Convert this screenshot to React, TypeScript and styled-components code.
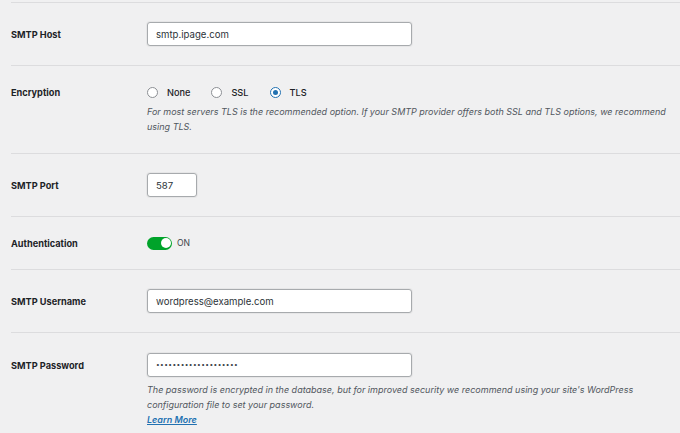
import * as React from "react";
import styled, { createGlobalStyle } from "styled-components";

const GlobalStyle = createGlobalStyle`
  html, body {
    margin: 0;
    padding: 0;
    background: #f0f0f1;
  }
  body {
    font-family: Inter, "Liberation Sans", Arial, sans-serif;
    color: #1d2327;
    -webkit-font-smoothing: antialiased;
  }
`;

const Page = styled.div`
  width: 680px;
  height: 433px;
  overflow: hidden;
  padding-top: 2px;
  box-sizing: border-box;
`;

const Row = styled.section<{ $pt?: number }>`
  display: grid;
  grid-template-columns: 136px 1fr;
  margin-left: 11px;
  padding: ${(p) => p.$pt ?? 19}px 0 19px;
  border-top: 1px solid #dcdcde;
`;

const Label = styled.div<{ $h: number }>`
  height: ${(p) => p.$h}px;
  display: flex;
  align-items: center;
  font-size: 9.2px;
  font-weight: 700;
  color: #1d2327;
`;

const Field = styled.div`
  display: flex;
  flex-direction: column;
  align-items: flex-start;
`;

const TextInput = styled.input<{ $w: number }>`
  width: ${(p) => p.$w}px;
  height: 24px;
  box-sizing: border-box;
  margin: 0;
  padding: 0 8px;
  border: 1px solid #a7aaad;
  border-radius: 3px;
  background: #fff;
  font-family: inherit;
  font-size: 9.6px;
  color: #2c3338;
  outline: none;
  box-shadow: 0 0 0 1px rgba(0, 0, 0, 0.04);

  &[type="password"] {
    font-size: 6.6px;
    letter-spacing: 0.4px;
    color: #3c434a;
  }
`;

const RadioGroup = styled.div`
  display: flex;
  align-items: center;
  height: 14px;
`;

const RadioOption = styled.label`
  display: flex;
  align-items: center;
  gap: 9px;
  margin-right: 21px;
  font-size: 9.2px;
  font-weight: 500;
  color: #1d2327;
  cursor: pointer;
`;

const RadioDot = styled.span<{ $on?: boolean }>`
  width: 11px;
  height: 11px;
  box-sizing: border-box;
  border-radius: 50%;
  background: #fff;
  border: 1px solid ${(p) => (p.$on ? "#2271b1" : "#8c8f94")};
  display: flex;
  align-items: center;
  justify-content: center;

  &::after {
    content: "";
    display: ${(p) => (p.$on ? "block" : "none")};
    width: 5px;
    height: 5px;
    border-radius: 50%;
    background: #2271b1;
  }
`;

const Description = styled.p`
  margin: 5px 0 0;
  font-size: 9px;
  line-height: 15px;
  font-style: italic;
  color: #50575e;
  max-width: 526px;
`;

const LearnMore = styled.a`
  color: #2271b1;
  font-weight: 600;
  text-decoration: underline;
`;

const ToggleWrap = styled.div`
  display: flex;
  align-items: center;
  gap: 5px;
  height: 14px;
  font-size: 8.6px;
  color: #3c434a;
`;

const Track = styled.span<{ $on?: boolean }>`
  width: 25px;
  height: 13px;
  border-radius: 7px;
  background: ${(p) => (p.$on ? "#00a32a" : "#8c8f94")};
  display: flex;
  align-items: center;
  justify-content: ${(p) => (p.$on ? "flex-end" : "flex-start")};
  padding: 0 1.5px;
  box-sizing: border-box;

  &::after {
    content: "";
    width: 10px;
    height: 10px;
    border-radius: 50%;
    background: #fff;
  }
`;

const encryptions = ["None", "SSL", "TLS"];

export default function App() {
  const [enc, setEnc] = React.useState("TLS");

  return (
    <Page>
      <GlobalStyle />
      <Row>
        <Label $h={24}>SMTP Host</Label>
        <Field>
          <TextInput $w={265} value="smtp.ipage.com" readOnly />
        </Field>
      </Row>

      <Row>
        <Label $h={14}>Encryption</Label>
        <Field>
          <RadioGroup>
            {encryptions.map((e) => (
              <RadioOption key={e} onClick={() => setEnc(e)}>
                <RadioDot $on={enc === e} />
                {e}
              </RadioOption>
            ))}
          </RadioGroup>
          <Description>
            For most servers TLS is the recommended option. If your SMTP provider offers both SSL and TLS
            options, we recommend using TLS.
          </Description>
        </Field>
      </Row>

      <Row>
        <Label $h={24}>SMTP Port</Label>
        <Field>
          <TextInput $w={50} value="587" readOnly />
        </Field>
      </Row>

      <Row>
        <Label $h={14}>Authentication</Label>
        <Field>
          <ToggleWrap>
            <Track $on />
            ON
          </ToggleWrap>
        </Field>
      </Row>

      <Row>
        <Label $h={24}>SMTP Username</Label>
        <Field>
          <TextInput $w={265} value="wordpress@example.com" readOnly />
        </Field>
      </Row>

      <Row $pt={20}>
        <Label $h={24}>SMTP Password</Label>
        <Field>
          <TextInput $w={265} type="password" value="passwordpassword1234" readOnly />
          <Description>
            The password is encrypted in the database, but for improved security we recommend using your
            site's WordPress configuration file to set your password.
            <br />
            <LearnMore href="#">Learn More</LearnMore>
          </Description>
        </Field>
      </Row>
    </Page>
  );
}
